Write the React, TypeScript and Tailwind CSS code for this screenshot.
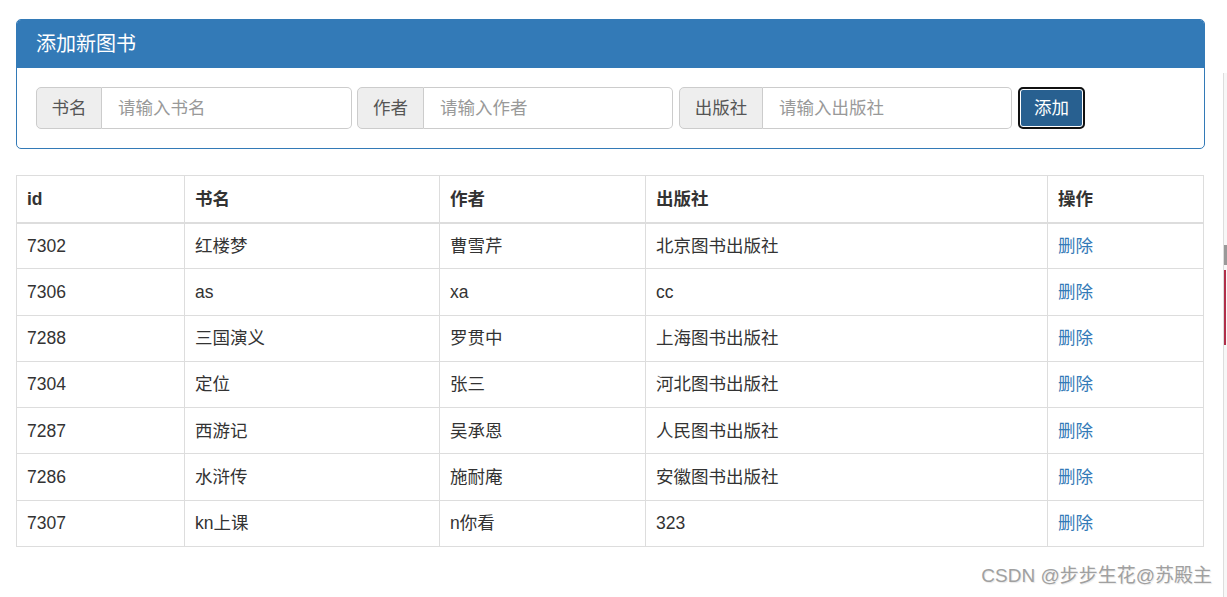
import React from 'react'

const books = [
  { id: 7302, name: '红楼梦', author: '曹雪芹', pub: '北京图书出版社' },
  { id: 7306, name: 'as', author: 'xa', pub: 'cc' },
  { id: 7288, name: '三国演义', author: '罗贯中', pub: '上海图书出版社' },
  { id: 7304, name: '定位', author: '张三', pub: '河北图书出版社' },
  { id: 7287, name: '西游记', author: '吴承恩', pub: '人民图书出版社' },
  { id: 7286, name: '水浒传', author: '施耐庵', pub: '安徽图书出版社' },
  { id: 7307, name: 'kn上课', author: 'n你看', pub: '323' },
]

function Field({ label, placeholder, addonW, inputW }: { label: string; placeholder: string; addonW: string; inputW: string }) {
  return (
    <div className="flex h-[42px]">
      <span className={`${addonW} flex items-center justify-center bg-[#eee] border border-[#ccc] rounded-l-[5px] text-[#555]`}>
        {label}
      </span>
      <input
        className={`${inputW} border border-l-0 border-[#ccc] rounded-r-[5px] px-4 outline-none placeholder:text-[#999] text-[#555]`}
        placeholder={placeholder}
      />
    </div>
  )
}

export default function App() {
  return (
    <div
      className="flex w-[1227px] h-[597px] bg-white text-[17.5px] text-[#333] overflow-hidden"
      style={{ fontFamily: '"Liberation Sans", "Noto Sans CJK SC", sans-serif' }}
    >
      <div className="w-[1223px] pl-4 pr-[18px] pt-[19px] relative">
        {/* Panel */}
        <div className="border border-[#337ab7] rounded-[5px] overflow-hidden">
          <div className="bg-[#337ab7] text-white text-[20px] h-[48px] flex items-center px-[19px]">
            添加新图书
          </div>
          <div className="px-[19px] pt-[19px] pb-[19px] flex items-center gap-[5px]">
            <Field label="书名" placeholder="请输入书名" addonW="w-[66px]" inputW="w-[250px]" />
            <Field label="作者" placeholder="请输入作者" addonW="w-[67px]" inputW="w-[249px]" />
            <div className="ml-px">
              <Field label="出版社" placeholder="请输入出版社" addonW="w-[84px]" inputW="w-[249px]" />
            </div>
            <button className="ml-px h-[42px] w-[67px] rounded-[5px] border-2 border-[#111] bg-[#286090] text-white shadow-[inset_0_0_0_1px_#fff]">
              添加
            </button>
          </div>
        </div>

        {/* Table */}
        <table className="mt-[26px] w-[1188px] border-collapse border border-[#ddd]">
          <thead>
            <tr className="h-[47px] border-b-2 border-[#ddd]">
              <th className="w-[168px] border border-[#ddd] px-[10px] text-left font-bold">id</th>
              <th className="w-[255px] border border-[#ddd] px-[10px] text-left font-bold">书名</th>
              <th className="w-[206px] border border-[#ddd] px-[10px] text-left font-bold">作者</th>
              <th className="w-[402px] border border-[#ddd] px-[10px] text-left font-bold">出版社</th>
              <th className="border border-[#ddd] px-[10px] text-left font-bold">操作</th>
            </tr>
          </thead>
          <tbody>
            {books.map(b => (
              <tr key={b.id} className="h-[46.3px]">
                <td className="border border-[#ddd] px-[10px]">{b.id}</td>
                <td className="border border-[#ddd] px-[10px]">{b.name}</td>
                <td className="border border-[#ddd] px-[10px]">{b.author}</td>
                <td className="border border-[#ddd] px-[10px]">{b.pub}</td>
                <td className="border border-[#ddd] px-[10px] text-[#337ab7]">删除</td>
              </tr>
            ))}
          </tbody>
        </table>

        <div className="absolute right-[11px] bottom-[7px] text-[19px] text-[#a0a0a0] [text-shadow:1px_1px_1px_#e8e8e8]">
          CSDN @步步生花@苏殿主
        </div>
      </div>

      {/* Edge of neighbouring window */}
      <div className="flex-1 flex flex-col bg-[#f7f7f7] border-l border-[#ddd] mt-[73px]">
        <div className="h-[172px]" />
        <div className="h-[20px] bg-[#999]" />
        <div className="h-[5px]" />
        <div className="h-[75px] border-l-2 border-[#b0304a]" />
      </div>
    </div>
  )
}
